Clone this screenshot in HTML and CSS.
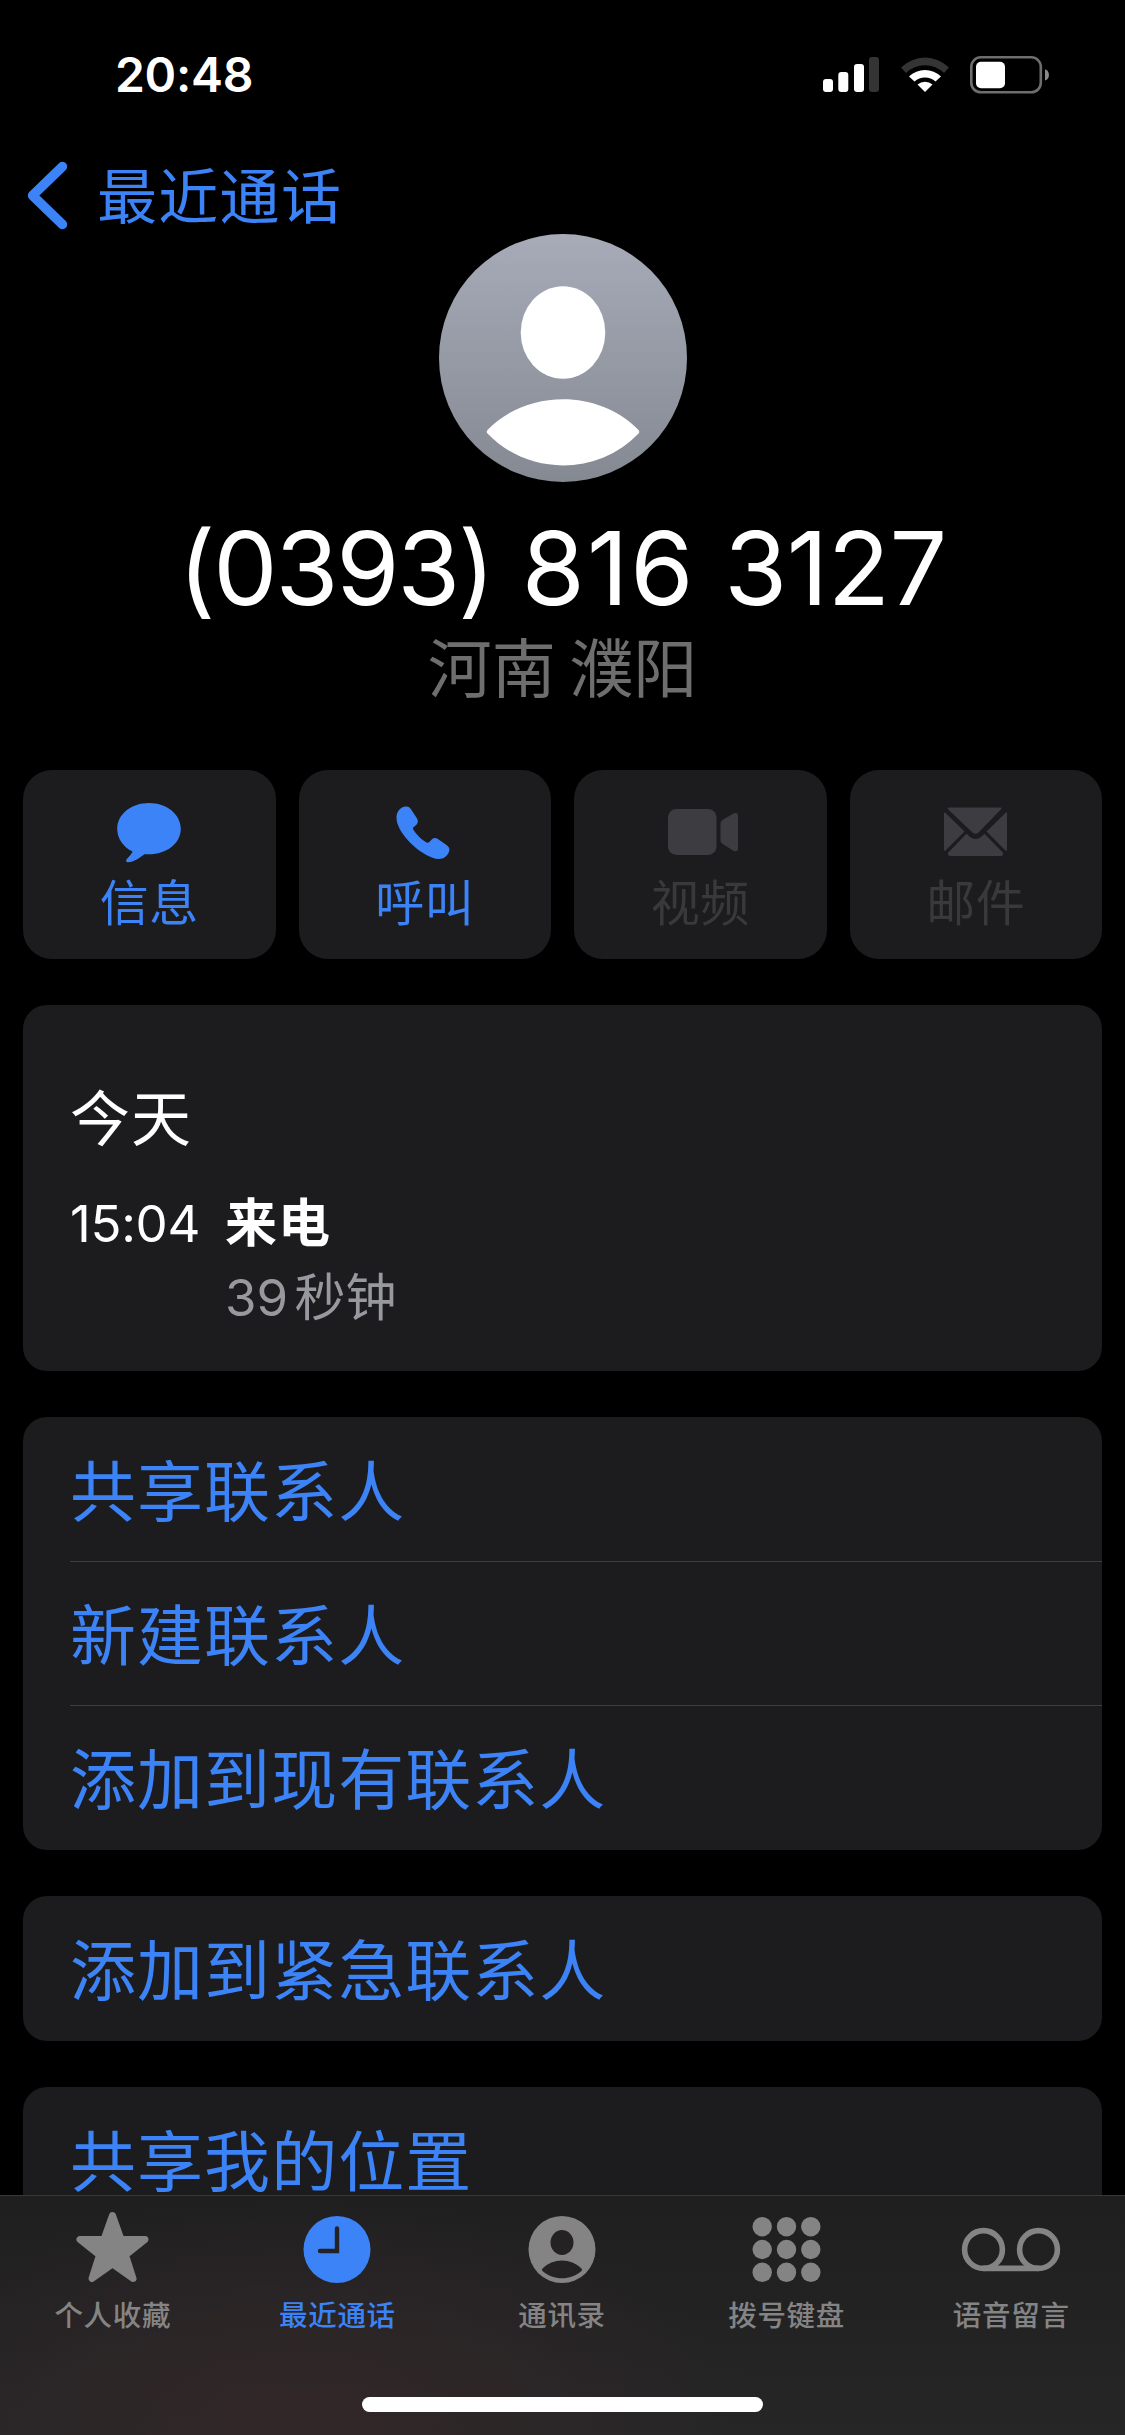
FILE: index.html
```html
<!DOCTYPE html>
<html lang="zh-CN">
<head>
<meta charset="utf-8">
<title>最近通话</title>
<link rel="stylesheet" href="styles.css">
</head>
<body>
<div class="screen">
  <header class="status">
    <span class="clock">20:48</span>
    <div class="indicators">
      <svg class="signal" width="58" height="38" viewBox="0 0 58 38">
        <rect x="0" y="23" width="10" height="13" rx="3" fill="#fff"/>
        <rect x="15.300" y="16" width="10" height="20" rx="3" fill="#fff"/>
        <rect x="31" y="8" width="10" height="28" rx="3" fill="#fff"/>
        <rect x="46" y="1" width="10" height="35" rx="3" fill="#343434"/>
      </svg>
      <svg class="wifi" width="50" height="38" viewBox="0 0 50 38">
        <path d="M1 11.500A34 34 0 0 1 49 11.500L44 17A27 27 0 0 0 6 17Z" fill="#343434"/>
        <path d="M9 20.500A23 23 0 0 1 41 20.500L35.500 25.500A15.500 15.500 0 0 0 14.500 25.500Z" fill="#fff"/>
        <path d="M17.500 28.500A11.500 11.500 0 0 1 32.500 28.500L25 36Z" fill="#fff"/>
      </svg>
      <svg class="battery" width="80" height="38" viewBox="0 0 80 38">
        <rect x="1.300" y="1.300" width="69.500" height="35" rx="9.500" fill="none" stroke="#6e6e6e" stroke-width="2.600"/>
        <rect x="6" y="5.700" width="29" height="26.500" rx="5" fill="#fff"/>
        <path d="M75 13.200C80.300 15 80.300 22.800 75 24.500Z" fill="#8a8a8a"/>
      </svg>
    </div>
  </header>

  <nav class="nav">
    <svg class="chevron" width="44" height="76" viewBox="0 0 44 76">
      <path d="M36.500 12.500L6.500 41.500L36.500 70.500" fill="none" stroke="currentColor" stroke-width="9.400" stroke-linecap="round" stroke-linejoin="round"/>
    </svg>
    <span class="nav-title">最近通话</span>
  </nav>

  <main class="content">
    <section class="profile">
      <svg class="avatar" width="248" height="248" viewBox="0 0 248 248">
        <defs>
          <linearGradient id="avatarFill" x1="0" y1="0" x2="0" y2="1">
            <stop offset="0" stop-color="#a7abb8"/>
            <stop offset="1" stop-color="#858992"/>
          </linearGradient>
        </defs>
        <circle cx="124" cy="124" r="124" fill="url(#avatarFill)"/>
        <ellipse cx="124" cy="98.500" rx="42.300" ry="46.200" fill="#fff"/>
        <path d="M48.500 196C88 155 160 155 199.500 196Q201 198 199.500 199.500C159 242 89 242 48.500 199.500Q47 198 48.500 196Z" fill="#fff"/>
      </svg>
      <h1 class="number"><span class="area">(0393)</span> <span class="prefix">816</span> <span class="line">3127</span></h1>
      <p class="region">河南 濮阳</p>
    </section>

    <section class="actions">
      <div class="action">
        <svg width="80" height="64" viewBox="0 0 80 64">
          <path d="M40 2C57.500 2 71.800 13 71.800 27.800S57.500 53.300 40 53.300Q37.500 53.300 35.500 53.200C31 56.500 25 61 19 61.200C16.800 61.200 16.600 59.300 17.800 58C20.500 55.200 22.800 53 23.600 50.600C14 46 8.200 37.500 8.200 27.800C8.200 13 22.500 2 40 2Z" fill="currentColor"/>
        </svg>
        <span class="action-label">信息</span>
      </div>
      <div class="action">
        <svg width="80" height="64" viewBox="3 0 80 64">
          <path d="M17.500 8.500C19.500 6.500 22 5.200 24.500 5.500C26.500 5.700 28 6.700 29 8.300L35 17.500C36.500 20 36 22 34.200 23.900L31.500 26.300C30.700 27.100 30.900 28 31.600 29.100C34 33.200 39 38.200 43.600 41C45 41.800 46.300 42 47.300 41L50 38.300C51.700 36.600 53.500 36.500 55.500 37.800L64.500 44C66.500 45.500 67.500 47 67.400 49C67.200 51.500 65.500 54 63.500 55.700C60 58.500 55.500 58.500 50.500 56.700C43 54 35 48.500 28 41.500C21 34.500 16 26.500 14.800 20C14 15 14.800 11.300 17.500 8.500Z" fill="currentColor"/>
        </svg>
        <span class="action-label">呼叫</span>
      </div>
      <div class="action disabled">
        <svg width="80" height="64" viewBox="0 0 80 64">
          <rect x="8" y="8" width="48.500" height="46" rx="8.500" fill="currentColor"/>
          <path d="M60.500 22.500Q60.500 20.500 62 19.200L72.500 13C76 11.200 78 12.200 78 15V47.500C78 50.500 75.500 51 73 49.400L62 42.500Q60.500 41.500 60.500 39.500Z" fill="currentColor"/>
        </svg>
        <span class="action-label">视频</span>
      </div>
      <div class="action disabled">
        <svg width="80" height="64" viewBox="0 0 80 64">
          <path d="M13.500 6.500H64.500Q66.500 6.500 65 8.200L42.500 31.500Q39.500 34.200 36.500 31.500L12 8.200Q11 6.500 13.500 6.500ZM8 12Q8 10.800 9.500 12L28.500 30.500L9.500 49.500Q8 50.800 8 48.500ZM71 12Q71 10.500 69.500 12L50.500 30.500L69.500 49.500Q71 50.800 71 48.500ZM30.500 32.800L34 36Q39.500 40 45 36L48.500 32.800L67 51.800Q67.500 55 64.500 55H14.500Q11.500 55 12 51.800Z" fill="currentColor"/>
        </svg>
        <span class="action-label">邮件</span>
      </div>
    </section>

    <section class="card calls">
      <h2 class="day">今天</h2>
      <div class="call">
        <span class="call-time">15:04</span>
        <div class="call-info">
          <p class="call-type">来电</p>
          <p class="call-length">39 秒钟</p>
        </div>
      </div>
    </section>

    <section class="card list">
      <div class="row">共享联系人</div>
      <div class="row">新建联系人</div>
      <div class="row">添加到现有联系人</div>
    </section>
    <section class="card list">
      <div class="row">添加到紧急联系人</div>
    </section>
    <section class="card list">
      <div class="row">共享我的位置</div>
    </section>
  </main>

  <footer class="tabbar">
    <div class="tabs">
      <div class="tab">
        <svg width="100" height="80" viewBox="0.500 0 100 80">
          <path d="M50 6.500L58.500 30.500H82.500L63 46L70.500 69.500L50 55L29.500 69.500L37 46L17.500 30.500H41.500Z" fill="currentColor" stroke="currentColor" stroke-width="7" stroke-linejoin="round"/>
        </svg>
        <span class="tab-label">个人收藏</span>
      </div>
      <div class="tab active">
        <svg width="100" height="80" viewBox="0 0 100 80">
          <circle cx="50" cy="40.500" r="33.500" fill="currentColor"/>
          <path d="M50 19.500V42H33" fill="none" stroke="#242223" stroke-width="4.400" stroke-linecap="round" stroke-linejoin="miter"/>
        </svg>
        <span class="tab-label">最近通话</span>
      </div>
      <div class="tab">
        <svg width="100" height="80" viewBox="0 0 100 80">
          <circle cx="50" cy="40.500" r="33.500" fill="currentColor"/>
          <ellipse cx="50" cy="33.500" rx="11.500" ry="12.500" fill="#242223"/>
          <path d="M30.500 59.500C41 48.800 59 48.800 69.500 59.500Q70.700 61 69.500 62C58 71.700 42 71.700 30.500 62Q29.300 61 30.500 59.500Z" fill="#242223"/>
        </svg>
        <span class="tab-label">通讯录</span>
      </div>
      <div class="tab">
        <svg width="100" height="80" viewBox="0.500 0 100 80">
          <g fill="currentColor">
            <circle cx="25.700" cy="17.700" r="9.700"/><circle cx="50" cy="17.700" r="9.700"/><circle cx="74.300" cy="17.700" r="9.700"/>
            <circle cx="25.700" cy="40.500" r="9.700"/><circle cx="50" cy="40.500" r="9.700"/><circle cx="74.300" cy="40.500" r="9.700"/>
            <circle cx="25.700" cy="63.300" r="9.700"/><circle cx="50" cy="63.300" r="9.700"/><circle cx="74.300" cy="63.300" r="9.700"/>
          </g>
        </svg>
        <span class="tab-label">拨号键盘</span>
      </div>
      <div class="tab">
        <svg width="100" height="80" viewBox="0 0 100 80">
          <g fill="none" stroke="currentColor" stroke-width="5.600">
            <circle cx="22.500" cy="40.500" r="18.900"/>
            <circle cx="77.500" cy="40.500" r="18.900"/>
            <path d="M22.500 59.400H77.500"/>
          </g>
        </svg>
        <span class="tab-label">语音留言</span>
      </div>
    </div>
    <div class="home"></div>
  </footer>
</div>
</body>
</html>
```
FILE: styles.css
```css
* {
  box-sizing: border-box;
  margin: 0;
  padding: 0;
}

body {
  background: #000;
  color: #fff;
  font-family: "Noto Sans CJK SC", sans-serif;
}

svg {
  display: block;
  flex: none;
}

.screen {
  display: flex;
  flex-direction: column;
  width: 1125px;
  height: 2435px;
  overflow: hidden;
}

/* Status bar */
.status {
  flex: none;
  display: flex;
  align-items: center;
  justify-content: space-between;
  height: 150px;
  padding: 0 75px 0 115px;
}

.clock {
  font: 600 48px/60px Inter, sans-serif;
  letter-spacing: -0.300px;
}

.indicators {
  display: flex;
}

.wifi {
  margin-left: 19px;
}

.battery {
  margin-left: 20px;
}

/* Navigation */
.nav {
  flex: none;
  display: flex;
  align-items: center;
  height: 84px;
  padding-left: 26px;
  color: #3c83f7;
}

.nav-title {
  padding-top: 2px;
  margin-left: 27px;
  font-size: 60px;
  line-height: 84px;
  letter-spacing: 1.300px;
}

.content {
  flex: 1;
  min-height: 0;
  overflow: hidden;
  padding: 0 23px;
}

/* Profile */
.profile {
  display: flex;
  flex-direction: column;
  align-items: center;
}

.number {
  margin-top: 31px;
  font: 400 102px/110px Inter, sans-serif;
  white-space: nowrap;
}

.area {
  letter-spacing: -2.200px;
}

.prefix {
  letter-spacing: 2px;
}

.line {
  letter-spacing: -0.500px;
}

.region {
  color: #6e6e6e;
  font-size: 64px;
  line-height: 83px;
  word-spacing: -1px;
}

/* Quick actions */
.actions {
  display: grid;
  grid-template-columns: repeat(4, 1fr);
  gap: 23px;
  margin-top: 64px;
}

.action {
  display: flex;
  flex-direction: column;
  align-items: center;
  height: 189px;
  padding-top: 31px;
  border-radius: 29px;
  background: #1c1c1e;
  color: #3c83f7;
}

.action-label {
  margin-top: 2px;
  font-size: 49px;
  line-height: 66px;
  letter-spacing: 0.500px;
}

.action.disabled {
  color: #3d3c40;
}

.disabled .action-label {
  color: #39393b;
}

/* Cards */
.card {
  margin-top: 46px;
  border-radius: 24px;
  background: #1c1c1e;
}

.calls {
  height: 366px;
  padding: 68px 47px 0;
}

.day {
  font-size: 60px;
  font-weight: 400;
  line-height: 84px;
  letter-spacing: 1px;
}

.call {
  display: flex;
  margin-top: 30px;
  font-family: Inter, "Noto Sans CJK SC", sans-serif;
  font-size: 51px;
  line-height: 74px;
}

.call-time {
  width: 155px;
  letter-spacing: -0.300px;
}

.call-type {
  font-weight: 700;
  font-size: 52px;
  letter-spacing: 1px;
}

.call-length {
  color: #98989f;
  word-spacing: -8px;
}

.list {
  padding-left: 47px;
}

.row {
  height: 144px;
  color: #3c83f7;
  font-size: 66px;
  line-height: 140px;
  letter-spacing: 1.050px;
}

.row:last-child {
  height: 145px;
}

.row + .row {
  box-shadow: inset 0 1px #3d3d41;
}

/* Tab bar */
.tabbar {
  flex: none;
  display: flex;
  flex-direction: column;
  align-items: center;
  height: 240px;
  padding-bottom: 23px;
  border-top: 1px solid #38383a;
  background:
    radial-gradient(ellipse 460px 230px at 300px 225px, rgba(52, 39, 40, 0.85), rgba(50, 39, 40, 0.5) 50%, rgba(36, 35, 36, 0) 100%),
    linear-gradient(#1f1f20, #262627);
}

.tabs {
  display: grid;
  grid-template-columns: repeat(5, 1fr);
  width: 1123px;
  margin-right: 1px;
  padding-top: 13px;
}

.tab {
  display: flex;
  flex-direction: column;
  align-items: center;
  gap: 5px;
  color: #858484;
}

.tab.active {
  color: #3c83f7;
}

.tab-label {
  font-size: 28.500px;
  font-weight: 500;
  line-height: 40px;
  letter-spacing: 0.700px;
}

.home {
  width: 401px;
  height: 15px;
  margin-top: auto;
  border-radius: 8px;
  background: #fff;
}
```
